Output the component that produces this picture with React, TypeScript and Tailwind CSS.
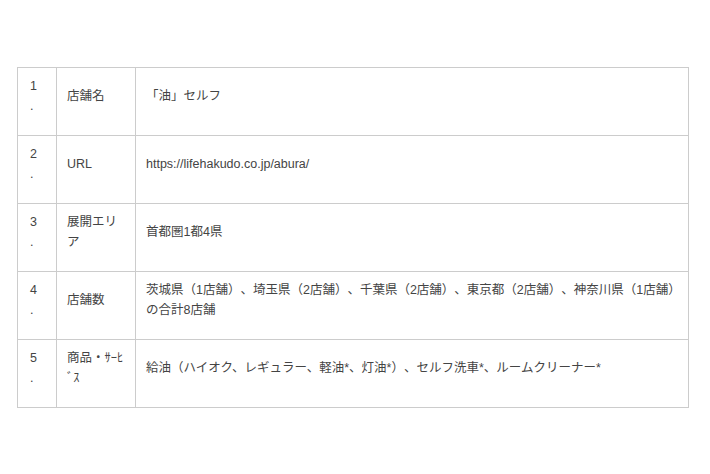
export default function App() {
  const rows: { no: string; label: React.ReactNode; value: React.ReactNode }[] = [
    { no: '1', label: '店舗名', value: '「油」セルフ' },
    { no: '2', label: 'URL', value: 'https://lifehakudo.co.jp/abura/' },
    { no: '3', label: '展開エリア', value: '首都圏1都4県' },
    {
      no: '4',
      label: '店舗数',
      value: (
        <>
          <span className="whitespace-nowrap">
            茨城県（1店舗）、埼玉県（2店舗）、千葉県（2店舗）、東京都（2店舗）、神奈川県（1店舗）
          </span>
          <br />
          の合計8店舗
        </>
      ),
    },
    {
      no: '5',
      label: (
        <>
          商品・ｻｰﾋ
          <br />
          ﾞｽ
        </>
      ),
      value: '給油（ハイオク、レギュラー、軽油*、灯油*）、セルフ洗車*、ルームクリーナー*',
    },
  ]

  return (
    <div className="w-[710px] h-[474px] bg-white pt-[67px] pl-[17px] font-['Liberation_Sans','Noto_Sans_CJK_JP',sans-serif] text-[12.5px] leading-[20px] text-[#444] [text-spacing-trim:space-all]">
      <table className="table-fixed border-collapse border border-[#cccccc] w-[672px]">
        <colgroup>
          <col className="w-[39px]" />
          <col className="w-[79px]" />
          <col />
        </colgroup>
        <tbody>
          {rows.map((r) => (
            <tr key={r.no}>
              <td className="border border-[#cccccc] align-middle pt-[8px] pb-[19px] pl-[12px] pr-[6px]">
                {r.no}
                <br />.
              </td>
              <td className="border border-[#cccccc] align-middle pt-[8px] pb-[19px] px-[10px]">
                {r.label}
              </td>
              <td className="border border-[#cccccc] align-middle pt-[8px] pb-[19px] pl-[10px] pr-[6px]">
                {r.value}
              </td>
            </tr>
          ))}
        </tbody>
      </table>
    </div>
  )
}
